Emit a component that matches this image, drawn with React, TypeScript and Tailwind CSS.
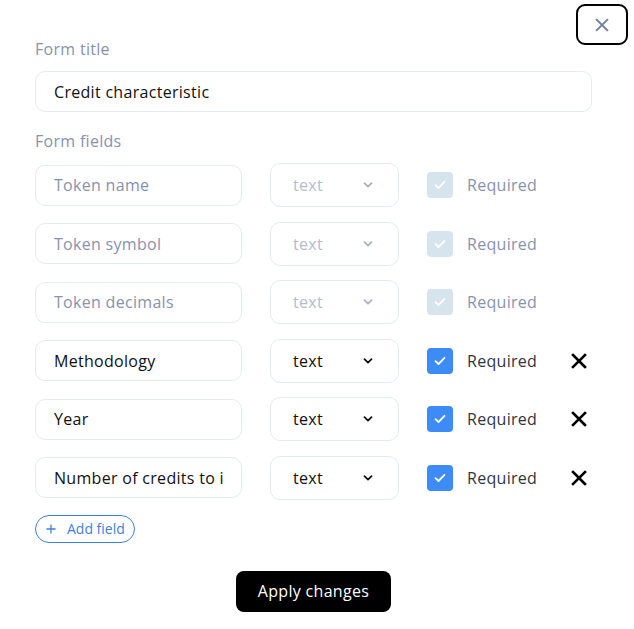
import { Plus } from 'lucide-react'

type Field = { name: string; placeholder?: boolean; locked: boolean }

const fields: Field[] = [
  { name: 'Token name', placeholder: true, locked: true },
  { name: 'Token symbol', placeholder: true, locked: true },
  { name: 'Token decimals', placeholder: true, locked: true },
  { name: 'Methodology', locked: false },
  { name: 'Year', locked: false },
  { name: 'Number of credits to issue', locked: false },
]

function Check() {
  return (
    <svg width="12" height="10" viewBox="0 0 12 10" fill="none">
      <path d="M1.5 5.2 4.5 8 10.5 1.8" stroke="white" strokeWidth="1.8" strokeLinecap="round" strokeLinejoin="round" />
    </svg>
  )
}

function Cross({ size, color, width }: { size: number; color: string; width: number }) {
  return (
    <svg width={size} height={size} viewBox="0 0 16 16" fill="none">
      <path d="M2 2 14 14M14 2 2 14" stroke={color} strokeWidth={width} strokeLinecap="square" />
    </svg>
  )
}

function Chevron({ color }: { color: string }) {
  return (
    <svg width="10" height="6" viewBox="0 0 10 6" fill="none">
      <path d="M1.5 1.2 5 4.6 8.5 1.2" stroke={color} strokeWidth="1.8" strokeLinecap="round" strokeLinejoin="round" />
    </svg>
  )
}

export default function App() {
  return (
    <div className="relative w-[634px] h-[629px] bg-white font-['Open_Sans',sans-serif] text-[16px] tracking-[0.3px]">
      {/* close */}
      <button className="absolute top-[4px] left-[576px] w-[52px] h-[41px] rounded-[9px] border-2 border-black flex items-center justify-center">
        <Cross size={14} color="#7282a3" width={2.2} />
      </button>

      <div className="flex flex-col pl-[35px] pt-[39px]">
        <label className="h-5 leading-5 text-[#8892ad]">Form title</label>
        <div className="mt-3 w-[557px] h-[41px] rounded-[10px] border border-[#e4e9f3] flex items-center px-[18px] text-[#111]">
          Credit characteristic
        </div>

        <label className="mt-[19px] h-5 leading-5 text-[#8892ad]">Form fields</label>

        <div className="mt-3 flex flex-col gap-[14.5px]">
          {fields.map((f) => (
            <div key={f.name} className="flex items-center h-[44px]">
              {f.placeholder ? (
                <input
                  readOnly
                  placeholder={f.name}
                  className="w-[207px] h-[41px] rounded-[10px] border border-[#e4e9f3] px-[18px] outline-none placeholder:text-[#8892ad]"
                />
              ) : (
                <input
                  readOnly
                  value={f.name}
                  className="w-[207px] h-[41px] rounded-[10px] border border-[#e4e9f3] px-[18px] outline-none text-[#111]"
                />
              )}
              <div className="ml-[28px] w-[129px] h-[44px] rounded-[10px] border border-[#e4e9f3] flex items-center justify-between pl-[22px] pr-[25px]">
                <span className={f.locked ? 'text-[#b5bccd]' : 'text-[#111]'}>text</span>
                <Chevron color={f.locked ? '#a9b1c4' : '#111'} />
              </div>
              <div
                className={`ml-[28px] w-[26px] h-[26px] rounded-[4px] flex items-center justify-center ${
                  f.locked ? 'bg-[#d6e4ee]' : 'bg-[#3d8bf7]'
                }`}
              >
                <Check />
              </div>
              <span className={`ml-[14px] ${f.locked ? 'text-[#8892ad]' : 'text-[#2f3540]'}`}>Required</span>
              {!f.locked && (
                <span className="ml-[34px] flex items-center">
                  <Cross size={16} color="#000" width={2.6} />
                </span>
              )}
            </div>
          ))}
        </div>

        <button className="mt-[15px] self-start h-[28px] rounded-full border border-[#3f7fe0] flex items-center gap-[9px] pl-[8px] pr-[9px] text-[14px] tracking-normal text-[#3f7fe0]">
          <Plus size={14} strokeWidth={2.2} />
          Add field
        </button>

        <button className="mt-[28px] ml-[201px] self-start w-[155px] h-[41px] rounded-[8px] bg-black text-white text-[16px] font-medium">
          Apply changes
        </button>
      </div>
    </div>
  )
}
